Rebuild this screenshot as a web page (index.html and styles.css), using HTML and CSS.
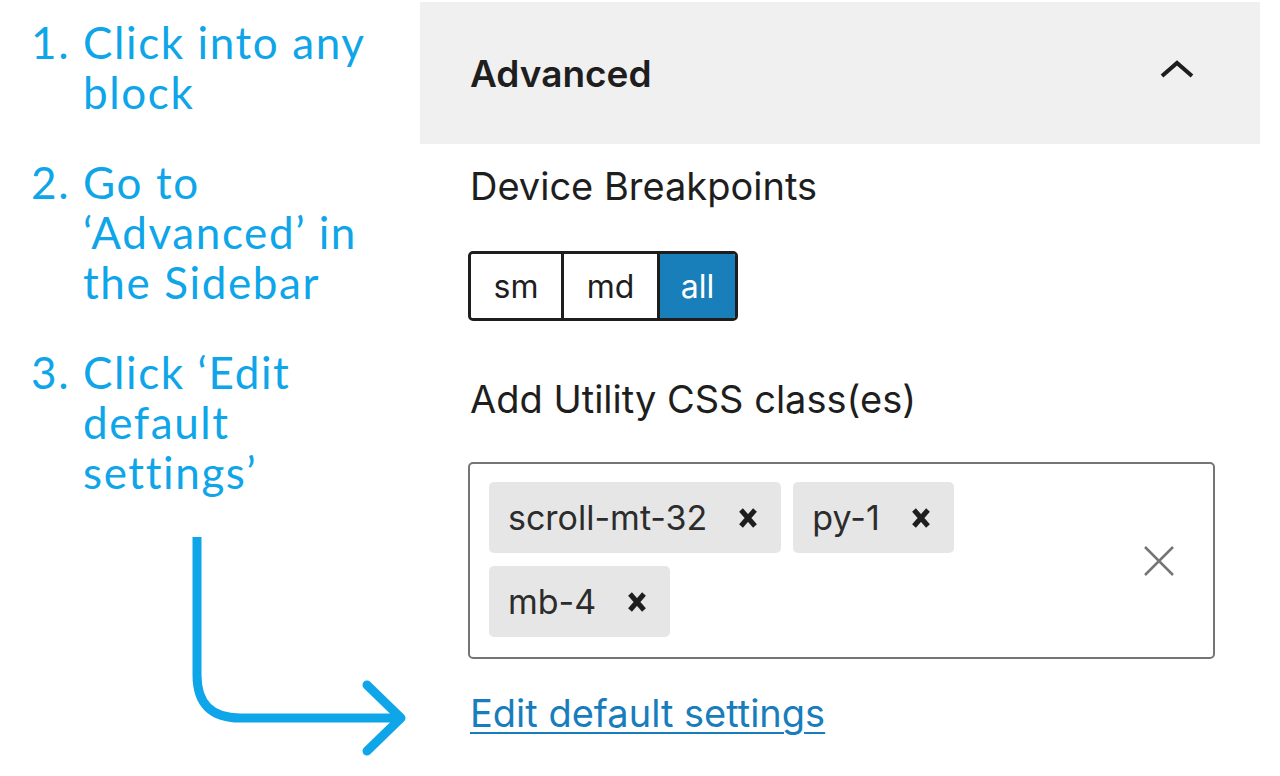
FILE: index.html
```html
<!DOCTYPE html>
<html lang="en">
<head>
  <meta charset="UTF-8" />
  <meta name="viewport" content="width=device-width, initial-scale=1" />
  <title>Utility CSS classes</title>
  <link rel="stylesheet" href="styles.css">
</head>
<body>

  <!-- Steps on the left -->
  <div class="steps">
    <ol class="step-list">
      <li>Click into any block</li>
      <li>Go to &lsquo;Advanced&rsquo; in the Sidebar</li>
      <li>Click &lsquo;Edit default settings&rsquo;</li>
    </ol>

    <svg class="pointer" viewBox="0 0 230 230" width="230" height="230" fill="none" stroke="#0ea5e9" stroke-width="9" stroke-linecap="round" stroke-linejoin="round" aria-hidden="true">
      <path d="M14 0 V138 Q14 181 57 181 H218" stroke-linecap="butt" />
      <path d="M184 148 L218 181 L184 214" />
    </svg>
  </div>

  <!-- Sidebar panel -->
  <div class="sidebar">
    <div class="panel-header">
      <span class="panel-title">Advanced</span>
      <svg class="chevron" viewBox="0 0 34 18" width="34" height="18" fill="none" stroke="#1e1e1e" stroke-width="4" aria-hidden="true">
        <path d="M2 16 L17 3 L32 16" />
      </svg>
    </div>

    <div class="panel-body">
      <div class="field-label label-breakpoints">Device Breakpoints</div>
      <div class="segmented">
        <button class="seg">sm</button>
        <button class="seg">md</button>
        <button class="seg active">all</button>
      </div>

      <div class="field-label label-classes">Add Utility CSS class(es)</div>
      <div class="token-field">
        <div class="tokens">
          <span class="token">scroll-mt-32
            <svg class="token-x" viewBox="0 0 20 20" width="20" height="20" stroke="#1e1e1e" stroke-width="5" aria-hidden="true"><path d="M3 2 L17 18 M17 2 L3 18" /></svg>
          </span>
          <span class="token">py-1
            <svg class="token-x" viewBox="0 0 20 20" width="20" height="20" stroke="#1e1e1e" stroke-width="5" aria-hidden="true"><path d="M3 2 L17 18 M17 2 L3 18" /></svg>
          </span>
          <span class="token">mb-4
            <svg class="token-x" viewBox="0 0 20 20" width="20" height="20" stroke="#1e1e1e" stroke-width="5" aria-hidden="true"><path d="M3 2 L17 18 M17 2 L3 18" /></svg>
          </span>
        </div>
        <svg class="clear-x" viewBox="0 0 32 32" width="32" height="32" stroke="#757575" stroke-width="2.5" aria-hidden="true">
          <path d="M2 2 L30 30 M30 2 L2 30" />
        </svg>
      </div>

      <a class="settings-link" href="#">Edit default settings</a>
    </div>
  </div>

</body>
</html>
```

FILE: styles.css
```css
body {
  margin: 0;
  background: #fff;
  display: flex;
  align-items: flex-start;
  font-family: 'Inter', 'Liberation Sans', sans-serif;
  color: #1e1e1e;
  overflow: hidden;
}

/* Left column with the steps */
.steps {
  width: 420px;
  flex-shrink: 0;
  padding-top: 17px;
}

.step-list {
  margin: 0;
  padding-left: 83px;
  font-family: 'Lato', sans-serif;
  font-size: 44px;
  line-height: 50px;
  letter-spacing: 1.6px;
  color: #0ea5e9;
}

.step-list li {
  padding-right: 45px;
  margin-bottom: 40px;
}

.step-list li::marker {
  font-family: 'Lato', sans-serif;
}

.pointer {
  display: block;
  margin: 38px 0 0 183px;
}

/* Right column */
.sidebar {
  width: 840px;
  flex-shrink: 0;
  padding-top: 2px;
}

.panel-header {
  height: 142px;
  background: #f0f0f0;
  display: flex;
  align-items: center;
  justify-content: space-between;
  padding: 0 66px 0 50px;
}

.panel-title {
  font-size: 37px;
  font-weight: 600;
}

.chevron {
  margin-top: -8px;
}

.panel-body {
  padding: 0 48px 0 48px;
}

.field-label {
  font-size: 38px;
  line-height: 44px;
  padding-left: 2px;
}

.label-breakpoints {
  margin-top: 20px;
}

.label-classes {
  margin-top: 56px;
}

.segmented {
  display: inline-flex;
  margin-top: 43px;
  border: 3px solid #1e1e1e;
  border-radius: 5px;
  overflow: hidden;
  height: 70px;
  box-sizing: border-box;
}

.seg {
  border: none;
  background: #fff;
  font-family: 'Inter', 'Liberation Sans', sans-serif;
  font-size: 32px;
  color: #1e1e1e;
  padding: 0;
  width: 90px;
}

.seg + .seg {
  border-left: 3px solid #1e1e1e;
}

.seg:nth-child(2) {
  width: 96px;
}

.seg.active {
  width: 78px;
  background: #187fbb;
  color: #fff;
}

.token-field {
  margin-top: 41px;
  width: 747px;
  height: 197px;
  box-sizing: border-box;
  border: 2px solid #757575;
  border-radius: 5px;
  padding: 18px 38px 18px 19px;
  display: flex;
  align-items: center;
}

.tokens {
  max-width: 600px;
  display: flex;
  flex-wrap: wrap;
  gap: 13px 12px;
  align-content: flex-start;
  align-self: flex-start;
}

.token {
  display: inline-flex;
  align-items: center;
  gap: 31px;
  height: 71px;
  padding: 0 23px 0 19px;
  background: #e6e6e6;
  border-radius: 5px;
  font-size: 34px;
  color: #2c2c2c;
}

.clear-x {
  flex-shrink: 0;
  margin-left: auto;
}

.settings-link {
  display: inline-block;
  margin-top: 32px;
  padding-left: 2px;
  font-size: 38px;
  line-height: 44px;
  color: #177dbc;
  text-decoration: underline;
  text-decoration-thickness: 2px;
  text-underline-offset: 5px;
}
```
